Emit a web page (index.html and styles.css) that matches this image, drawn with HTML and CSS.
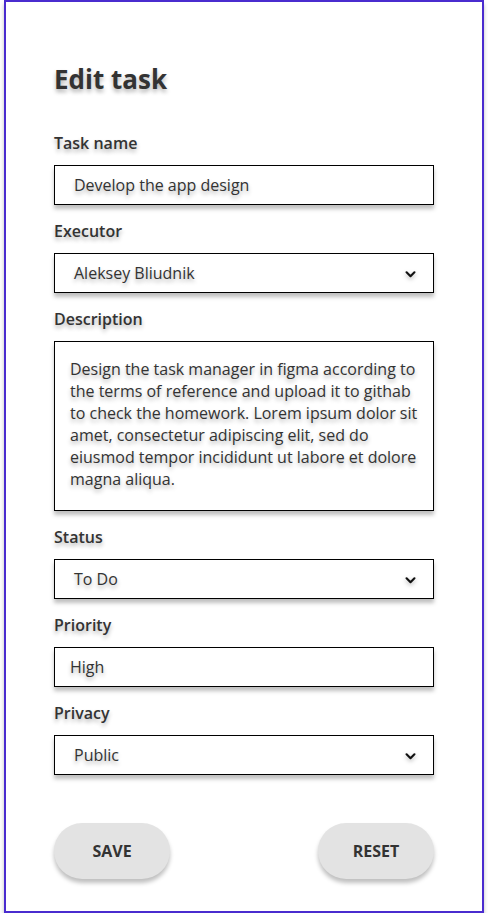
FILE: index.html
```html
<!DOCTYPE html>
<html lang="en">
<head>
  <meta charset="UTF-8">
  <meta name="viewport" content="width=device-width, initial-scale=1.0">
  <title>Edit task</title>
  <link rel="stylesheet" href="styles.css">
</head>
<body>
  <div class="frame">
    <h1 class="title">Edit task</h1>

    <form class="task-form">
      <div class="field">
        <label>Task name</label>
        <div class="control text-control">Develop the app design</div>
      </div>

      <div class="field">
        <label>Executor</label>
        <div class="control select-control">
          <span>Aleksey Bliudnik</span>
          <svg class="chevron" viewBox="0 0 12 8" width="11" height="7"><path d="M1.5 1.5 L6 6 L10.5 1.5" fill="none" stroke="#111" stroke-width="2.4" stroke-linecap="round" stroke-linejoin="round"/></svg>
        </div>
      </div>

      <div class="field">
        <label>Description</label>
        <div class="control area-control">Design the task manager in figma according to the terms of reference and upload it to githab to check the homework. Lorem ipsum dolor sit amet, consectetur adipiscing elit, sed do eiusmod tempor incididunt ut labore et dolore magna aliqua.</div>
      </div>

      <div class="field">
        <label>Status</label>
        <div class="control select-control">
          <span>To Do</span>
          <svg class="chevron" viewBox="0 0 12 8" width="11" height="7"><path d="M1.5 1.5 L6 6 L10.5 1.5" fill="none" stroke="#111" stroke-width="2.4" stroke-linecap="round" stroke-linejoin="round"/></svg>
        </div>
      </div>

      <div class="field">
        <label>Priority</label>
        <div class="control text-control narrow">High</div>
      </div>

      <div class="field">
        <label>Privacy</label>
        <div class="control select-control">
          <span>Public</span>
          <svg class="chevron" viewBox="0 0 12 8" width="11" height="7"><path d="M1.5 1.5 L6 6 L10.5 1.5" fill="none" stroke="#111" stroke-width="2.4" stroke-linecap="round" stroke-linejoin="round"/></svg>
        </div>
      </div>

      <div class="buttons">
        <button type="button" class="btn">SAVE</button>
        <button type="button" class="btn">RESET</button>
      </div>
    </form>
  </div>
</body>
</html>
```

FILE: styles.css
```css
body {
  margin: 0;
  background: #fff;
  font-family: "Open Sans", "Noto Sans", sans-serif;
  color: #333;
}
.frame {
  box-sizing: border-box;
  width: 480px;
  height: 913px;
  margin-left: 4px;
  border: 2px solid #4a2ccf;
  box-shadow: 0 4px 4px rgba(0, 0, 0, 0.25);
  padding: 60px 48px 0;
  background: #fff;
}
.title {
  margin: 0 0 36px;
  font-size: 26px;
  line-height: 34px;
  font-weight: 700;
  color: #333;
  text-shadow: 0 3px 4px rgba(0, 0, 0, 0.3);
}
.task-form {
  display: flex;
  flex-direction: column;
  gap: 15px;
}
.field {
  display: flex;
  flex-direction: column;
  gap: 11px;
}
.field label {
  font-size: 16px;
  line-height: 22px;
  font-weight: 600;
  color: #333;
  text-shadow: 0 3px 4px rgba(0, 0, 0, 0.3);
}
.control {
  box-sizing: border-box;
  border: 1px solid #000;
  background: #fff;
  box-shadow: 0 4px 4px rgba(0, 0, 0, 0.25);
  font-size: 16px;
  color: #333;
  text-shadow: 0 3px 4px rgba(0, 0, 0, 0.3);
}
.text-control {
  height: 40px;
  line-height: 38px;
  padding: 0 19px;
}
.text-control.narrow {
  padding: 0 15px;
}
.select-control {
  height: 40px;
  display: flex;
  align-items: center;
  justify-content: space-between;
  padding: 0 17px 0 19px;
}
.chevron {
  display: block;
  margin-top: 2px;
  filter: drop-shadow(0 2px 2px rgba(0, 0, 0, 0.3));
}
.area-control {
  height: 170px;
  padding: 16px 12px 0 15px;
  font-size: 16px;
  line-height: 22px;
}
.buttons {
  display: flex;
  justify-content: space-between;
  margin-top: 33px;
}
.btn {
  width: 116px;
  height: 56px;
  border: none;
  border-radius: 28px;
  background: #e3e3e3;
  box-shadow: 0 4px 4px rgba(0, 0, 0, 0.25);
  font-family: "Open Sans", "Noto Sans", sans-serif;
  font-size: 16px;
  font-weight: 700;
  color: #333;
  cursor: pointer;
}
```
